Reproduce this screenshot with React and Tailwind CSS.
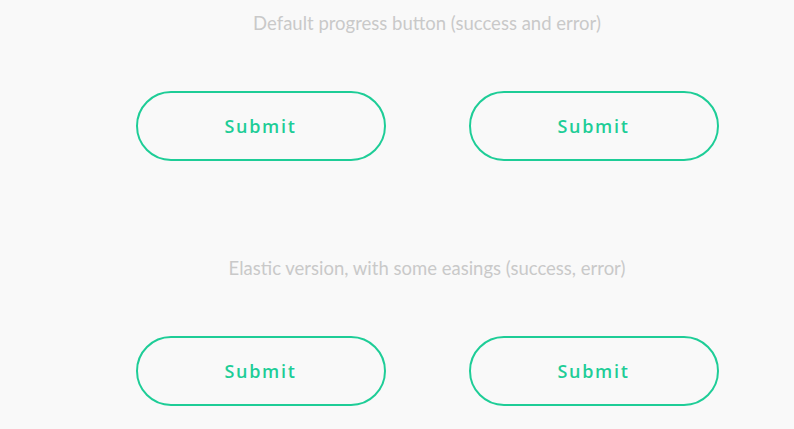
import React from "react";

const titles = [
  "Default progress button (success and error)",
  "Elastic version, with some easings (success, error)",
];

function SubmitButton() {
  return (
    <button
      className="w-[250px] h-[70px] rounded-full border-2 border-[#1ecd97] bg-transparent text-[#1ecd97] text-[18px] font-semibold tracking-[1.7px]"
      style={{ fontFamily: '"Open Sans", sans-serif' }}
    >
      Submit
    </button>
  );
}

export default function App() {
  return (
    <div className="min-h-screen bg-[#f9f9f9] overflow-hidden">
      <div className="w-[854px] pt-[11px]">
        {titles.map((t, i) => (
          <section key={i} className={i > 0 ? "mt-[95px]" : ""}>
            <h2
              className="h-6 leading-6 text-center text-[18.5px] text-[#c9c9c9]"
              style={{ fontFamily: "Lato, sans-serif" }}
            >
              {t}
            </h2>
            <div className="mt-[56px] flex justify-center gap-[83px]">
              <SubmitButton />
              <SubmitButton />
            </div>
          </section>
        ))}
      </div>
    </div>
  );
}
